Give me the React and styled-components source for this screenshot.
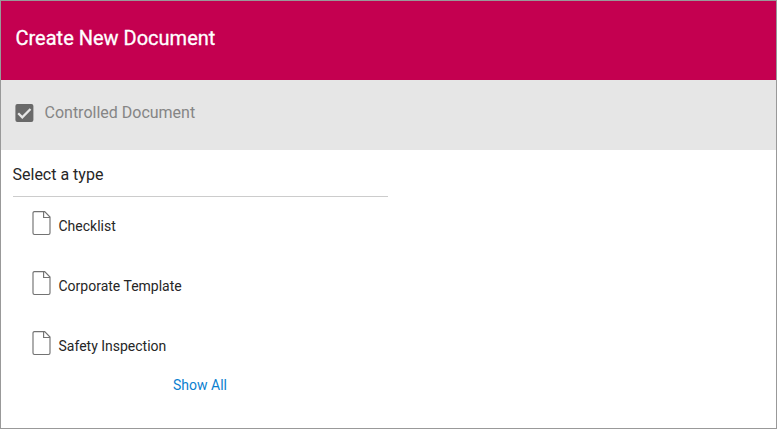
import React from "react";
import styled, { createGlobalStyle } from "styled-components";

const GlobalStyle = createGlobalStyle`
  * { box-sizing: border-box; }
  body { margin: 0; font-family: Roboto, sans-serif; background: #fff; }
`;
const Dialog = styled.main`
  display: flex;
  flex-direction: column;
  width: 777px;
  height: 429px;
  border: 1px solid #999;
  background: #fff;
`;
const Header = styled.header`
  height: 79px;
  padding: 25px 14.5px 0;
  background: #c40050;
`;
const Title = styled.h1`
  margin: 0;
  font-size: 20px;
  line-height: 24px;
  font-weight: 400;
  color: #fff;
  -webkit-text-stroke: 0.3px #fff;
`;
const OptionBar = styled.label`
  display: flex;
  align-items: flex-start;
  gap: 11.5px;
  height: 70px;
  padding: 23px 14px 0;
  background: #e6e6e6;
`;
const CheckIcon = styled.svg`
  width: 18px;
  height: 18px;
  margin-top: 1px;
  overflow: visible;
`;
const OptionLabel = styled.span`
  font-size: 16px;
  line-height: 19px;
  color: #858585;
`;
const TypePanel = styled.section`
  width: 387px;
  padding-left: 12px;
`;
const PanelTitle = styled.h2`
  height: 47px;
  margin: 0;
  padding-top: 15px;
  border-bottom: 1px solid #ccc;
  font-size: 16px;
  line-height: 19px;
  font-weight: 400;
  color: #262626;
  text-indent: -0.5px;
`;
const TypeList = styled.ul`
  margin: 0;
  padding: 0 0 0 19px;
  list-style: none;
`;
const TypeRow = styled.li`
  display: flex;
  height: 60px;
  padding-top: 13px;
  gap: 6.5px;
`;
const FileIcon = styled.svg`
  width: 20px;
  height: 26px;
`;
const TypeName = styled.span`
  padding-top: 8px;
  font-size: 14px;
  line-height: 17px;
  color: #262626;
`;
const ShowAll = styled.a`
  display: block;
  width: max-content;
  margin-left: 160px;
  font-size: 14px;
  line-height: 17px;
  color: #0b7fd0;
`;

const types = ["Checklist", "Corporate Template", "Safety Inspection"];

export default function App() {
  return (
    <Dialog>
      <GlobalStyle />
      <Header><Title>Create New Document</Title></Header>
      <OptionBar>
        <CheckIcon viewBox="0 0 18 18" fill="none">
          <rect x="0.4" width="18" height="18" rx="2" fill="#696969" />
          <path d="m3.2 9.2 4.1 4.1 8.2-8.3" stroke="#e6e6e6" strokeWidth="2.3" />
        </CheckIcon>
        <OptionLabel>Controlled Document</OptionLabel>
      </OptionBar>
      <TypePanel>
        <PanelTitle>Select a type</PanelTitle>
        <TypeList>
          {types.map((name) => (
            <TypeRow key={name}>
              <FileIcon viewBox="0 0 20 26" fill="none" stroke="#737373" strokeWidth="1.15">
                <path d="M2.4 1.6h10.3l5.3 5.5v16a1.4 1.4 0 0 1-1.4 1.4H2.4A1.4 1.4 0 0 1 1 23.1V3a1.4 1.4 0 0 1 1.4-1.4zM11.6 1.6v5.9H18" />
              </FileIcon>
              <TypeName>{name}</TypeName>
            </TypeRow>
          ))}
        </TypeList>
        <ShowAll>Show All</ShowAll>
      </TypePanel>
    </Dialog>
  );
}
